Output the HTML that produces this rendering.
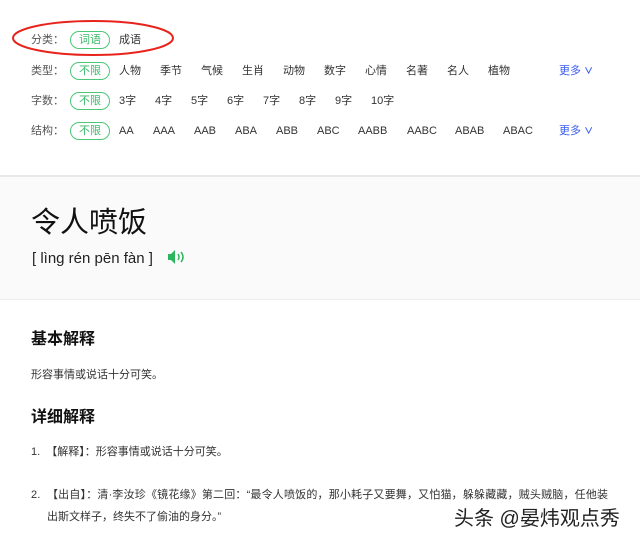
<!DOCTYPE html>
<html><head><meta charset="utf-8"><style>
body{margin:0;width:640px;height:542px;background:#fff;position:relative;overflow:hidden;font-family:"Liberation Sans","Noto Sans CJK SC",sans-serif;color:#333}
.a{position:absolute;white-space:nowrap;line-height:1}
.s{font-size:11px;color:#333}
.l{font-size:11px;color:#555}
.p{position:absolute;width:40px;height:18px;border:1px solid #4cc777;border-radius:10px;box-sizing:border-box;font-size:11px;color:#3bb86a;text-align:center;line-height:16px}
.m{font-size:11px;color:#3a5cf0}
</style></head><body>
<svg class="a" style="left:0;top:0" width="200" height="70"><ellipse cx="93" cy="38" rx="80" ry="17" fill="none" stroke="#e8231c" stroke-width="2"/></svg>
<div class="a l" style="left:31px;top:35px">分类：</div>
<div class="p" style="left:70px;top:31px">词语</div>
<div class="a s" style="left:119px;top:35px">成语</div>

<div class="a l" style="left:31px;top:66px">类型：</div>
<div class="p" style="left:70px;top:62px">不限</div>
<div class="a s" style="left:119px;top:66px">人物</div>
<div class="a s" style="left:160px;top:66px">季节</div>
<div class="a s" style="left:201px;top:66px">气候</div>
<div class="a s" style="left:242px;top:66px">生肖</div>
<div class="a s" style="left:283px;top:66px">动物</div>
<div class="a s" style="left:324px;top:66px">数字</div>
<div class="a s" style="left:365px;top:66px">心情</div>
<div class="a s" style="left:406px;top:66px">名著</div>
<div class="a s" style="left:447px;top:66px">名人</div>
<div class="a s" style="left:488px;top:66px">植物</div>
<div class="a m" style="left:559px;top:66px">更多 <b style="font-size:9px">∨</b></div>

<div class="a l" style="left:31px;top:96px">字数：</div>
<div class="p" style="left:70px;top:92px">不限</div>
<div class="a s" style="left:119px;top:96px">3字</div>
<div class="a s" style="left:155px;top:96px">4字</div>
<div class="a s" style="left:191px;top:96px">5字</div>
<div class="a s" style="left:227px;top:96px">6字</div>
<div class="a s" style="left:263px;top:96px">7字</div>
<div class="a s" style="left:299px;top:96px">8字</div>
<div class="a s" style="left:335px;top:96px">9字</div>
<div class="a s" style="left:371px;top:96px">10字</div>

<div class="a l" style="left:31px;top:126px">结构：</div>
<div class="p" style="left:70px;top:122px">不限</div>
<div class="a s" style="left:119px;top:126px">AA</div>
<div class="a s" style="left:153px;top:126px">AAA</div>
<div class="a s" style="left:194px;top:126px">AAB</div>
<div class="a s" style="left:235px;top:126px">ABA</div>
<div class="a s" style="left:276px;top:126px">ABB</div>
<div class="a s" style="left:317px;top:126px">ABC</div>
<div class="a s" style="left:358px;top:126px">AABB</div>
<div class="a s" style="left:407px;top:126px">AABC</div>
<div class="a s" style="left:455px;top:126px">ABAB</div>
<div class="a s" style="left:503px;top:126px">ABAC</div>
<div class="a m" style="left:559px;top:126px">更多 <b style="font-size:9px">∨</b></div>

<div class="a" style="left:0;top:175px;width:640px;height:122px;background:#fafafa;border-top:2px solid #e8e8e8;border-bottom:1px solid #ececec"></div>
<div class="a" style="left:31px;top:209px;font-size:29px;color:#111">令人喷饭</div>
<div class="a" style="left:32px;top:251px;font-size:15px;color:#222">[ lìng rén pēn fàn ]</div>
<svg class="a" style="left:168px;top:250px" width="18" height="14"><path d="M0 4h3l4-4v14l-4-4H0z" fill="#2db55d"/><path d="M10 4q2 3 0 6M13 2q4 5 0 10" stroke="#2db55d" stroke-width="1.5" fill="none"/></svg>

<div class="a" style="left:31px;top:332px;font-size:16px;font-weight:bold;color:#111">基本解释</div>
<div class="a s" style="left:31px;top:370px">形容事情或说话十分可笑。</div>
<div class="a" style="left:31px;top:410px;font-size:16px;font-weight:bold;color:#111">详细解释</div>
<div class="a s" style="left:31px;top:447px">1.&nbsp;&nbsp;【解释】：形容事情或说话十分可笑。</div>
<div class="a s" style="left:31px;top:490px;letter-spacing:0.18px">2.&nbsp;&nbsp;【出自】：清·李汝珍《镜花缘》第二回：“最令人喷饭的，那小耗子又要舞，又怕猫，躲躲藏藏，贼头贼脑，任他装</div>
<div class="a s" style="left:47px;top:512px">出斯文样子，终失不了偷油的身分。”</div>
<div class="a" style="left:454px;top:509px;font-size:20px;color:#222;text-shadow:0 0 2px #fff">头条 @晏炜观点秀</div>
</body></html>
